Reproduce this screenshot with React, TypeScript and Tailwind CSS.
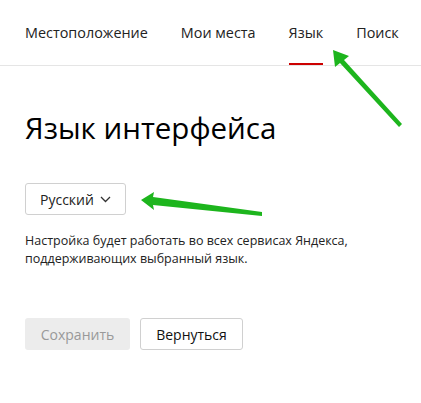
const tabs = ["Местоположение", "Мои места", "Язык", "Поиск"];

export default function App() {
  return (
    <div
      className="relative w-[421px] h-[403px] bg-white text-[#000] overflow-hidden"
      style={{ fontFamily: '"Open Sans", "Noto Sans", Arial, sans-serif' }}
    >
      {/* Tabs */}
      <div className="flex h-[66px] border-b border-[#e5e5e5] pl-[25px] gap-[33px]">
        {tabs.map((t) => (
          <div
            key={t}
            className={
              "flex items-center h-full text-[14.4px] text-[#222] " +
              (t === "Язык" ? "border-b-2 border-[#cc0000] -mb-px pt-[2px]" : "")
            }
          >
            {t}
          </div>
        ))}
      </div>

      <div className="px-[25px]">
        <h1 className="mt-[44px] text-[29.5px] leading-[36px] text-black">Язык интерфейса</h1>

        <button className="mt-[37px] flex items-center gap-[6px] h-[32px] px-[14px] border border-[#d0d0d0] rounded-[3px] text-[14px] text-[#222]">
          Русский
          <svg width="11" height="7" viewBox="0 0 11 7" fill="none">
            <path d="M1 1l4.5 4.5L10 1" stroke="#333" strokeWidth="1.3" />
          </svg>
        </button>

        <p className="mt-[17px] text-[12.5px] leading-[18px] text-[#222]">
          Настройка будет работать во всех сервисах Яндекса,
          <br />
          поддерживающих выбранный язык.
        </p>

        <div className="mt-[50px] flex gap-[10px]">
          <button className="h-[32px] w-[105px] rounded-[3px] bg-[#ececec] text-[14px] text-[#999]">
            Сохранить
          </button>
          <button className="h-[32px] w-[103px] rounded-[3px] border border-[#d0d0d0] text-[14px] text-[#111]">
            Вернуться
          </button>
        </div>
      </div>

      {/* annotation arrows */}
      <svg className="absolute inset-0 pointer-events-none" width="421" height="403" viewBox="0 0 421 403">
        <polygon points="333,50 349,56 344,60 402,124 399,127 340,63 335,67" fill="#1db51d" />
        <polygon points="141,200 154,192 153,197 262,212 262,216 153,205 154,210" fill="#1db51d" />
      </svg>
    </div>
  );
}
